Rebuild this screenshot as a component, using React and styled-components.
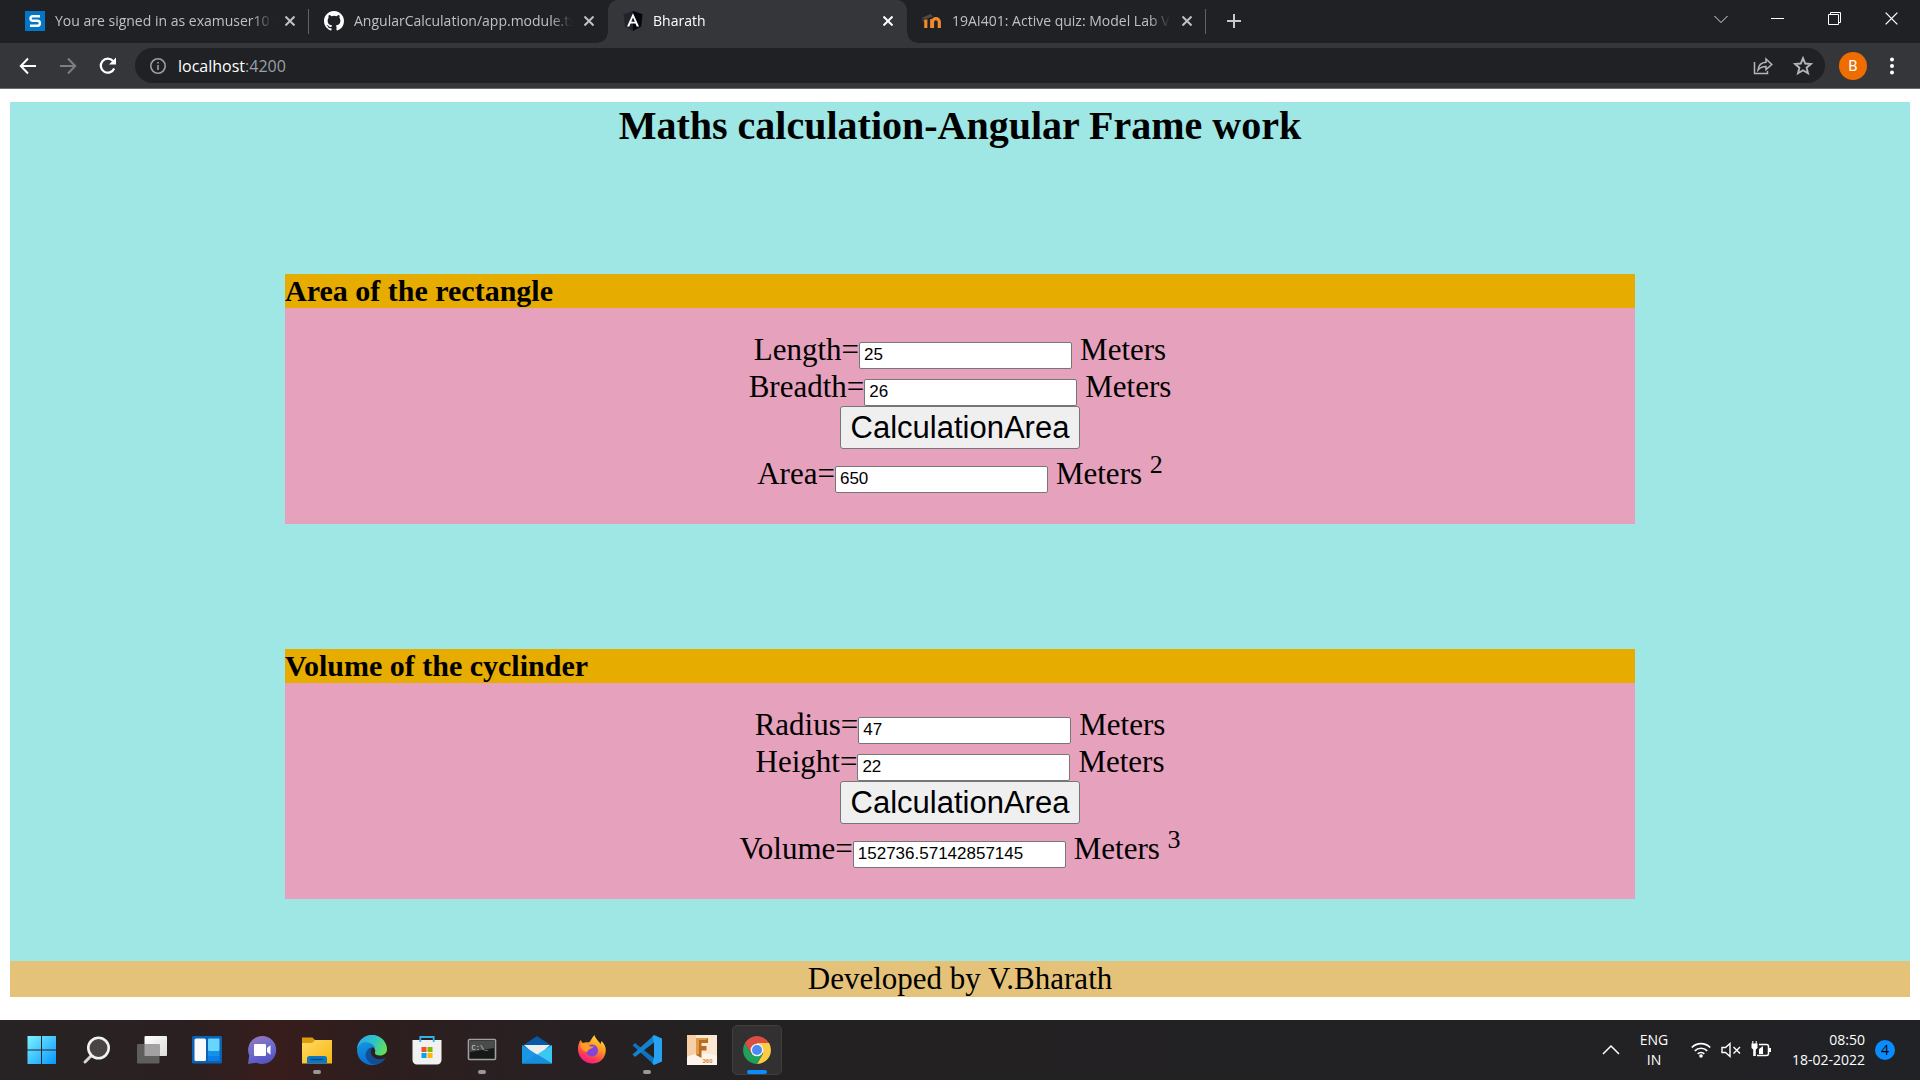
import React, { useState } from "react";
import styled, { createGlobalStyle } from "styled-components";

const UI_FONT = `"Open Sans", "Noto Sans", sans-serif`;
const SERIF = `"Liberation Serif", "Times New Roman", serif`;
const SANS = `"Liberation Sans", Arial, sans-serif`;

const GlobalStyle = createGlobalStyle`
  *, *::before, *::after { box-sizing: border-box; }
  body { margin: 0; background: #fff; font-family: ${SERIF}; color: #000; }
  button { font: inherit; }
`;

const Screen = styled.div`
  display: flex;
  flex-direction: column;
  min-height: 100vh;
`;

/* ---------- browser frame ---------- */

const BrowserFrame = styled.header`
  font-family: ${UI_FONT};
  border-bottom: 1px solid #6b6c6e;
`;

const TabStrip = styled.div`
  display: flex;
  height: 43px;
  padding-left: 10px;
  background: #202124;
`;

const Tab = styled.div`
  position: relative;
  display: flex;
  align-items: center;
  width: 299px;
  padding: 0 9px 1px 15px;
  font-size: 14px;
  line-height: 20px;
  color: ${(p) => (p.$active ? "#fff" : "#bdc1c6")};
  background: ${(p) => (p.$active ? "#35363a" : "transparent")};
  border-radius: 10px 10px 0 0;

  &::before,
  &::after {
    content: "";
    display: ${(p) => (p.$active ? "block" : "none")};
    position: absolute;
    bottom: 0;
    width: 10px;
    height: 10px;
  }
  &::before {
    left: -10px;
    background: radial-gradient(circle at 0 0, transparent 9px, #35363a 10px);
  }
  &::after {
    right: -10px;
    background: radial-gradient(circle at 100% 0, transparent 9px, #35363a 10px);
  }
`;

const TabDivider = styled.span`
  position: absolute;
  right: 0;
  top: 9px;
  width: 1px;
  height: 25px;
  background: #5f6368;
`;

const TabTitle = styled.span`
  flex: 1;
  margin-left: 10px;
  overflow: hidden;
  white-space: nowrap;
  mask-image: linear-gradient(to right, #000 calc(100% - 28px), transparent 97%);
`;

const IconButton = styled.button`
  display: flex;
  align-items: center;
  justify-content: center;
  flex: none;
  width: ${(p) => p.$w || 20}px;
  height: ${(p) => p.$h || 20}px;
  padding: 0;
  border: 0;
  background: none;
  color: ${(p) => p.$color || "inherit"};
  svg { display: block; }
`;

const NewTab = styled(IconButton)`
  margin: 7px 0 0 14px;
`;

const WindowControls = styled.div`
  display: flex;
  margin-left: auto;
`;

const Toolbar = styled.div`
  display: flex;
  align-items: center;
  height: 45px;
  padding: 0 8px;
  background: #35363a;
`;

const Omnibox = styled.form`
  display: flex;
  align-items: center;
  flex: 1;
  height: 35px;
  margin: 0 14px 0 7px;
  padding: 0 2px 0 13px;
  border-radius: 18px;
  background: #202124;
`;

const Address = styled.span`
  flex: 1;
  margin-left: 10px;
  font-size: 16px;
  line-height: 24px;
  color: #9aa0a6;
  b { font-weight: 400; color: #fff; }
`;

const Avatar = styled.button`
  width: 28px;
  height: 28px;
  margin-right: 5px;
  padding: 0;
  border: 0;
  border-radius: 50%;
  background: #ef6c00;
  color: #fff;
  font-family: Roboto, sans-serif;
  font-size: 15px;
`;

/* ---------- web page ---------- */

const Page = styled.main`
  flex: 1;
  padding: 13px 10px 23px;
`;

const Container = styled.div`
  padding-bottom: 62px;
  background: #9ee7e5;
`;

const Heading = styled.h1`
  margin: 0;
  font-size: 40px;
  line-height: 47px;
  text-align: center;
`;

const Section = styled.section`
  width: min(1350px, 100%);
  margin: 125px auto 0;
  background: #e6a1bc;
`;

const SectionTitle = styled.h2`
  margin: 0;
  background: #e6ac00;
  font-size: 30px;
  line-height: 34px;
`;

const SectionBody = styled.form`
  display: flex;
  flex-direction: column;
  align-items: center;
  padding: 23px 0 32px;
`;

const Field = styled.div`
  display: flex;
  align-items: baseline;
  height: 37px;
  font-size: 31px;
  line-height: 37px;
`;

const TextBox = styled.input`
  width: 213px;
  height: 27px;
  padding: 1px 4px;
  border: 1px solid #767676;
  border-radius: 2px;
  background: #fff;
  font-family: ${SANS};
  font-size: 17px;
  color: #000;
`;

const Unit = styled.span`
  margin-left: 8px;
  sup {
    font-size: 26px;
    line-height: 0;
    vertical-align: super;
  }
`;

const CalcButton = styled.button`
  height: 43px;
  margin: 1px 0 6px;
  padding: 0 10px;
  border: 1px solid #767676;
  border-radius: 3px;
  background: #efefef;
  font-family: ${SANS};
  font-size: 31px;
  line-height: 36px;
  color: #000;
`;

const Footer = styled.footer`
  background: #e5c27a;
  font-size: 31px;
  line-height: 36px;
  text-align: center;
`;

/* ---------- taskbar ---------- */

const Taskbar = styled.footer`
  display: flex;
  align-items: center;
  justify-content: space-between;
  height: 60px;
  padding: 0 25px 0 17px;
  background: linear-gradient(to right, #272324 0, #2b2021 190px, #381d1c 270px, #2e1e1e 370px, #292022 520px, #232122 720px, #222123 1500px, #212226 100%);
  font-family: ${UI_FONT};
  color: #fff;
`;

const AppList = styled.nav`
  display: flex;
  gap: 5px;
`;

const AppButton = styled.button`
  position: relative;
  display: flex;
  align-items: center;
  justify-content: center;
  width: 50px;
  height: 50px;
  padding: 0;
  border: 1px solid ${(p) => (p.$active ? "#403e3f" : "transparent")};
  border-radius: 5px;
  background: ${(p) => (p.$active ? "#323031" : "none")};
  svg { display: block; }
`;

const RunMark = styled.span`
  position: absolute;
  bottom: 0;
  left: 50%;
  width: ${(p) => (p.$active ? 20 : 8)}px;
  height: 4px;
  border-radius: 2px;
  background: ${(p) => (p.$active ? "#0a8cff" : "#9b9697")};
  transform: translateX(-50%);
`;

const Tray = styled.div`
  display: flex;
  align-items: center;
`;

const TrayText = styled.div`
  width: ${(p) => p.$w}px;
  font-size: 14px;
  line-height: 20px;
  text-align: ${(p) => p.$align};
`;

const TrayIcons = styled.div`
  display: flex;
  gap: 10px;
  margin: 0 16px 0 4px;
`;

const Badge = styled.span`
  width: 20px;
  height: 20px;
  margin-left: 10px;
  border-radius: 50%;
  background: #0a8cff;
  color: #000;
  font-size: 14px;
  line-height: 20px;
  text-align: center;
`;

/* ---------- icons ---------- */

const CloseIcon = ({ size = 10, w = 2 }) => (
  <svg width={size} height={size} viewBox="0 0 10 10" stroke="currentColor" strokeWidth={w} fill="none">
    <path d="M0.5 0.5 9.5 9.5M9.5 0.5 0.5 9.5" />
  </svg>
);

const MeetIcon = () => (
  <svg width="20" height="20" viewBox="0 0 20 20">
    <rect width="20" height="20" fill="#0277c8" />
    <path d="M15 5.2H7.8A2.3 2.3 0 0 0 7.8 9.8H12.4A2.4 2.4 0 0 1 12.4 14.8H5" fill="none" stroke="#fff" strokeWidth="2.4" />
  </svg>
);

const GithubIcon = () => (
  <svg width="20" height="20" viewBox="0 0 16 16" fill="#fff">
    <path d="M8 0C3.58 0 0 3.58 0 8c0 3.54 2.29 6.53 5.47 7.59.4.07.55-.17.55-.38 0-.19-.01-.82-.01-1.49-2.01.37-2.53-.49-2.69-.94-.09-.23-.48-.94-.82-1.13-.28-.15-.68-.52-.01-.53.63-.01 1.08.58 1.23.82.72 1.21 1.87.87 2.33.66.07-.52.28-.87.51-1.07-1.78-.2-3.64-.89-3.64-3.95 0-.87.31-1.59.82-2.15-.08-.2-.36-1.02.08-2.12 0 0 .67-.21 2.2.82a7.7 7.7 0 0 1 4 0c1.53-1.04 2.2-.82 2.2-.82.44 1.1.16 1.92.08 2.12.51.56.82 1.27.82 2.15 0 3.07-1.87 3.75-3.65 3.95.29.25.54.73.54 1.48 0 1.07-.01 1.93-.01 2.2 0 .21.15.46.55.38A8.01 8.01 0 0 0 16 8c0-4.42-3.58-8-8-8z" />
  </svg>
);

const AngularIcon = () => (
  <svg width="20" height="20" viewBox="0 0 20 20">
    <path d="M10 0 19.5 3.3 18 15.6 10 20 2 15.6 0.5 3.3z" fill="#20222c" />
    <path d="M10 0 19.5 3.3 18 15.6 10 20z" fill="#04060e" />
    <path d="M10 2.2 4 15.6H6.3L7.5 12.6H12.5L13.7 15.6H16zM10 6.4 11.8 10.7H8.2z" fill="#fff" fillRule="evenodd" />
  </svg>
);

const MoodleIcon = () => (
  <svg width="20" height="20" viewBox="0 0 20 20">
    <path d="M3.8 17V8.5M10.5 17V11a3.3 3.3 0 0 1 6.8 0V17" stroke="#f08a2c" strokeWidth="3.2" fill="none" />
    <path d="M9.7 8.2V17" stroke="#f08a2c" strokeWidth="3.2" />
    <path d="M0 6.8 8.5 3 11 5.5 4 8z" fill="#57483f" />
    <path d="M1 7V11" stroke="#57483f" strokeWidth="1" />
  </svg>
);

const Stroke = ({ size = 20, box = 20, w = 2, children }) => (
  <svg width={size} height={size} viewBox={`0 0 ${box} ${box}`} fill="none" stroke="currentColor" strokeWidth={w}>
    {children}
  </svg>
);

const StartIcon = () => (
  <svg width="30" height="30" viewBox="0 0 30 30">
    <defs>
      <linearGradient id="start" x1="0" y1="0" x2="1" y2="1">
        <stop offset="0" stopColor="#7df3ff" />
        <stop offset="1" stopColor="#0795ff" />
      </linearGradient>
    </defs>
    <path d="M0.5 1H14V14.4H0.5zM15 1H29V14.4H15zM0.5 15.4H14V29H0.5zM15 15.4H29V29H15z" fill="url(#start)" />
  </svg>
);

const SearchIcon = () => (
  <svg width="30" height="30" viewBox="0 0 30 30">
    <path d="M9.5 20.5 3 27" stroke="#d3d5d8" strokeWidth="3" strokeLinecap="round" />
    <circle cx="16.5" cy="13" r="10.2" fill="#4a4445" stroke="#f1f2f3" strokeWidth="2.6" />
  </svg>
);

const TaskViewIcon = () => (
  <svg width="30" height="30" viewBox="0 0 30 30">
    <defs>
      <linearGradient id="tv" x1="0" y1="0" x2="1" y2="1">
        <stop offset="0" stopColor="#fff" />
        <stop offset="1" stopColor="#dcdcdc" />
      </linearGradient>
    </defs>
    <rect x="7.5" y="1" width="22.5" height="20" rx="1" fill="url(#tv)" />
    <rect x="0" y="9" width="22.5" height="19.5" rx="1" fill="#5f5e5e" />
    <rect x="7.5" y="9" width="15" height="12" fill="#a3a1a1" />
  </svg>
);

const WidgetsIcon = () => (
  <svg width="30" height="30" viewBox="0 0 30 30">
    <rect y="1" width="30" height="27.5" rx="1.5" fill="#0b62b5" />
    <rect x="2.5" y="3.5" width="11.5" height="22.5" rx="1.5" fill="#fafafa" />
    <rect x="16" y="3.5" width="11.5" height="12.5" rx="1" fill="#67d5fc" />
    <rect x="16" y="16" width="11.5" height="5" fill="#1591ea" />
    <rect x="16" y="21" width="11.5" height="5" fill="#0a7ee6" />
  </svg>
);

const ChatIcon = () => (
  <svg width="30" height="30" viewBox="0 0 30 30">
    <defs>
      <linearGradient id="chat" x1="0.3" y1="0" x2="0.7" y2="1">
        <stop offset="0" stopColor="#9477b8" />
        <stop offset="0.5" stopColor="#6a6bd0" />
        <stop offset="1" stopColor="#5450bd" />
      </linearGradient>
    </defs>
    <path d="M15 1A14 14 0 1 1 9.5 27.8L1 29 2.2 20.5A14 14 0 0 1 15 1z" fill="url(#chat)" />
    <rect x="7" y="9" width="12" height="12" rx="1" fill="#fff" />
    <path d="M20 13 23.5 10.3V19.7L20 17z" fill="#fff" />
  </svg>
);

const ExplorerIcon = () => (
  <svg width="30" height="30" viewBox="0 0 30 30">
    <defs>
      <linearGradient id="fold" x1="0" y1="0" x2="1" y2="1">
        <stop offset="0" stopColor="#ffda69" />
        <stop offset="1" stopColor="#f8b60c" />
      </linearGradient>
    </defs>
    <path d="M0 2.5H10.5L13 5H20V12H0z" fill="#dd9b09" />
    <path d="M0 8H10L13 5H30V28.5H0z" fill="url(#fold)" />
    <path d="M5 28.5V23.5A2.5 2.5 0 0 1 7.5 21H22.5A2.5 2.5 0 0 1 25 23.5V28.5z" fill="#0c78c5" />
    <path d="M8.5 24.5H21.5" stroke="#07457f" strokeWidth="1.3" />
  </svg>
);

const EdgeIcon = () => (
  <svg width="30" height="30" viewBox="0 0 30 30">
    <defs>
      <linearGradient id="edgeTop" x1="0" y1="0.3" x2="1" y2="0.6">
        <stop offset="0" stopColor="#28a9e8" />
        <stop offset="0.55" stopColor="#32c4c4" />
        <stop offset="1" stopColor="#62e34f" />
      </linearGradient>
      <linearGradient id="edgeLow" x1="0" y1="0" x2="0.3" y2="1">
        <stop offset="0" stopColor="#1595e0" />
        <stop offset="1" stopColor="#0c6fd0" />
      </linearGradient>
    </defs>
    <path d="M0 15A15 15 0 0 1 30 14.5C30 18 27 20.5 23 20.5 19 20.5 17.5 19 18 17.5 19 14 17 11.5 12 10 7 8.5 1 11 0 15z" fill="url(#edgeTop)" />
    <path d="M0 15C1 9 6 6.5 11 7.5 15.5 8.5 18 11 18.2 13.5 15 11 11 14 11 18 11 24 17 28 22.5 28A15 15 0 0 1 0 15z" fill="url(#edgeLow)" />
    <path d="M12.5 13C10 15 8 18 9 22 10.5 27 15 30 19 29.5 24 28.5 27.5 25.5 28.5 22.5 25 25 18 25 15 20.5 13.5 18 13.5 15 15 12.5z" fill="#104f96" />
  </svg>
);

const StoreIcon = () => (
  <svg width="30" height="30" viewBox="0 0 30 30">
    <path d="M0.5 5H29.5V25A4.5 4.5 0 0 1 25 29.5H5A4.5 4.5 0 0 1 0.5 25z" fill="#f1f1f1" />
    <path d="M8.3 7V2H21.7V7" stroke="#2fb2ea" strokeWidth="1.8" fill="none" />
    <rect x="9.5" y="12" width="5" height="5" fill="#f05022" />
    <rect x="15.5" y="12" width="5" height="5" fill="#7fb900" />
    <rect x="9.5" y="18" width="5" height="5" fill="#03a4ef" />
    <rect x="15.5" y="18" width="5" height="5" fill="#ffb801" />
  </svg>
);

const TerminalIcon = () => (
  <svg width="30" height="30" viewBox="0 0 30 30">
    <rect x="1.5" y="4.5" width="27" height="20" rx="1" fill="#161717" stroke="#a0a0a0" strokeWidth="1.6" />
    <path d="M3 6H27V13L3 17z" fill="#4a4b4c" />
    <text x="4.5" y="14.5" fontSize="7" fontFamily="Liberation Mono, monospace" fill="#ddd">C:\_</text>
  </svg>
);

const MailIcon = () => (
  <svg width="30" height="30" viewBox="0 0 30 30">
    <path d="M0 11 15 1 30 11V20H0z" fill="#0759a8" />
    <path d="M2 10H28L15 22z" fill="#eeedee" />
    <path d="M0 10 15 19.5 30 28.5H0z" fill="#1a96e5" />
    <path d="M30 10 15 19.5 29.5 28.5H30z" fill="#39c7f3" />
    <path d="M0 28.5 15 19.5 30 28.5z" fill="#168ee0" />
  </svg>
);

const FirefoxIcon = () => (
  <svg width="30" height="30" viewBox="0 0 30 30">
    <defs>
      <linearGradient id="ff" x1="0.8" y1="0" x2="0.3" y2="1">
        <stop offset="0" stopColor="#ffe83a" />
        <stop offset="0.4" stopColor="#ff9a22" />
        <stop offset="0.75" stopColor="#ff3f55" />
        <stop offset="1" stopColor="#f5148c" />
      </linearGradient>
    </defs>
    <path d="M3.5 5 6 8.5C8 7 10 7 12 7.5 14 6 14.5 3 17.5 0 18.5 4 22 6 23.5 9L24.5 6C28 9.5 29.5 13 28.5 18 27 25 21 29 14.5 28.5 7 28 1.5 22 1 15 0.8 11 2 7.5 3.5 5z" fill="url(#ff)" />
    <circle cx="15" cy="15.5" r="6" fill="#8544d8" />
    <path d="M3.5 9C7 6.5 11 8.5 13 11.5L17 11.5C15 14 11 13.5 10.5 17 6 17 3.5 13 3.5 9z" fill="#ff9a22" />
  </svg>
);

const CodeIcon = () => (
  <svg width="30" height="30" viewBox="0 0 30 30">
    <path d="M0.5 10.2 3 8 22 23V29.8z" fill="#0b74be" />
    <path d="M0.5 19.5 3 22 22 7.5V0.3z" fill="#1382cf" />
    <path d="M22 0 30 3.5V26.5L22 30 20.5 28.5 22 22V8L20.5 1.5z" fill="#26a2f0" />
  </svg>
);

const FusionIcon = () => (
  <svg width="30" height="30" viewBox="0 0 30 30">
    <rect width="30" height="30" fill="#fbe7d3" />
    <path d="M0 0H9V19L0 22z" fill="#f6cfa8" />
    <path d="M0 22Q15 15 30 21V30H0z" fill="#fff4e9" />
    <path d="M9 3H21V8H14.5V11H19.5V15.5H14.5V23L9 20z" fill="#b96b22" />
    <path d="M9 3H21L19 5H12V19L9 20z" fill="#e29a48" />
    <text x="15.5" y="28" fontSize="6" fontWeight="700" fontFamily="Liberation Sans, sans-serif" fill="#d98236">360</text>
  </svg>
);

const ChromeIcon = () => (
  <svg width="28" height="28" viewBox="0 0 28 28">
    <path d="M14 14V7H26.1A14 14 0 0 1 14 28L20 17.5z" fill="#fdcb44" />
    <path d="M14 14 20 17.5 14 28A14 14 0 0 1 1.9 7L8 17.5z" fill="#1ea25b" />
    <path d="M14 7H26.1A14 14 0 0 0 1.9 7L8 17.5 14 14z" fill="#d94f43" />
    <circle cx="14" cy="14" r="6.3" fill="#f4f4f4" />
    <circle cx="14" cy="14" r="5" fill="#4a8af4" />
  </svg>
);

/* ---------- data ---------- */

const TABS = [
  { title: "You are signed in as examuser101", icon: <MeetIcon />, divider: true },
  { title: "AngularCalculation/app.module.ts", icon: <GithubIcon /> },
  { title: "Bharath", icon: <AngularIcon />, active: true },
  { title: "19AI401: Active quiz: Model Lab V", icon: <MoodleIcon />, divider: true },
];

const APPS = [
  { name: "Start", icon: <StartIcon /> },
  { name: "Search", icon: <SearchIcon /> },
  { name: "Task View", icon: <TaskViewIcon /> },
  { name: "Widgets", icon: <WidgetsIcon /> },
  { name: "Chat", icon: <ChatIcon /> },
  { name: "File Explorer", icon: <ExplorerIcon />, running: true },
  { name: "Edge", icon: <EdgeIcon /> },
  { name: "Store", icon: <StoreIcon /> },
  { name: "Command Prompt", icon: <TerminalIcon />, running: true },
  { name: "Mail", icon: <MailIcon /> },
  { name: "Firefox", icon: <FirefoxIcon /> },
  { name: "Code", icon: <CodeIcon />, running: true },
  { name: "Fusion", icon: <FusionIcon /> },
  { name: "Chrome", icon: <ChromeIcon />, running: true, active: true },
];

function Browser() {
  return (
    <BrowserFrame>
      <TabStrip>
        {TABS.map((t) => (
          <Tab key={t.title} $active={t.active}>
            {t.icon}
            <TabTitle>{t.title}</TabTitle>
            <IconButton aria-label="Close tab"><CloseIcon /></IconButton>
            {t.divider && <TabDivider />}
          </Tab>
        ))}
        <NewTab $w={28} $h={28} $color="#c6c8cc" aria-label="New tab">
          <Stroke size={16} box={16} w={2}><path d="M8 1V15M1 8H15" /></Stroke>
        </NewTab>
        <WindowControls>
          <IconButton $w={57} $h={37} $color="#dcdddd" aria-label="Search tabs">
            <Stroke size={14} box={14} w={1}><path d="M0.5 4 7 10.5 13.5 4" /></Stroke>
          </IconButton>
          <IconButton $w={57} $h={37} $color="#fff" aria-label="Minimize">
            <Stroke size={13} box={13} w={1}><path d="M0 6.5H13" /></Stroke>
          </IconButton>
          <IconButton $w={57} $h={37} $color="#fff" aria-label="Restore">
            <Stroke size={13} box={13} w={1}><path d="M0.5 2.5H10.5V12.5H0.5zM2.5 2.5V0.5H12.5V10.5H10.5" /></Stroke>
          </IconButton>
          <IconButton $w={57} $h={37} $color="#fff" aria-label="Close"><CloseIcon size={13} w={1} /></IconButton>
        </WindowControls>
      </TabStrip>
      <Toolbar>
        <IconButton $w={40} $h={40} $color="#fff" aria-label="Back">
          <Stroke><path d="M18 10H3M10 2.5 2.8 10 10 17.5" /></Stroke>
        </IconButton>
        <IconButton $w={40} $h={40} $color="#7d7e81" aria-label="Forward">
          <Stroke><path d="M2 10H17M10 2.5 17.2 10 10 17.5" /></Stroke>
        </IconButton>
        <IconButton $w={40} $h={40} $color="#fff" aria-label="Reload">
          <Stroke w={2.2}>
            <path d="M16.2 12.5A7 7 0 1 1 15 5" />
            <path d="M18 1.5V8.5H11z" fill="currentColor" stroke="none" />
          </Stroke>
        </IconButton>
        <Omnibox onSubmit={(e) => e.preventDefault()}>
          <IconButton type="button" $w={20} $h={20} $color="#9aa0a6" aria-label="Site information">
            <Stroke size={16} box={16} w={1.6}><circle cx="8" cy="8" r="7.2" /><path d="M8 7V12M8 4V5.6" /></Stroke>
          </IconButton>
          <Address><b>localhost</b>:4200</Address>
          <IconButton type="button" $w={40} $h={30} $color="#b4b6b8" aria-label="Share">
            <Stroke w={1.5}>
              <path d="M1.5 6V17.5H14.5V15" />
              <path d="M5 14C5.5 9 8.5 6.5 13 6.3V3L18.8 8.5 13 13.5V10.5C9.5 10.5 7 11.5 5 14z" />
            </Stroke>
          </IconButton>
          <IconButton type="button" $w={40} $h={30} $color="#b4b6b8" aria-label="Bookmark">
            <Stroke w={1.9}><path d="M10 2.2 12.2 7.5 18 8 13.6 11.7 15 17.3 10 14.3 5 17.3 6.4 11.7 2 8 7.8 7.5z" /></Stroke>
          </IconButton>
        </Omnibox>
        <Avatar aria-label="Profile">B</Avatar>
        <IconButton $w={40} $h={30} $color="#fff" aria-label="Menu">
          <svg width="4" height="18" viewBox="0 0 4 18" fill="currentColor">
            <circle cx="2" cy="2.5" r="2" /><circle cx="2" cy="9" r="2" /><circle cx="2" cy="15.5" r="2" />
          </svg>
        </IconButton>
      </Toolbar>
    </BrowserFrame>
  );
}

function Calculator({ id, title, first, second, result, power, compute }) {
  const [a, setA] = useState(first.value);
  const [b, setB] = useState(second.value);
  const [out, setOut] = useState(result.value);
  return (
    <Section>
      <SectionTitle>{title}</SectionTitle>
      <SectionBody onSubmit={(e) => { e.preventDefault(); setOut(String(compute(+a, +b))); }}>
        <Field>
          <label htmlFor={`${id}-a`}>{first.label}=</label>
          <TextBox id={`${id}-a`} type="text" value={a} onChange={(e) => setA(e.target.value)} />
          <Unit>Meters</Unit>
        </Field>
        <Field>
          <label htmlFor={`${id}-b`}>{second.label}=</label>
          <TextBox id={`${id}-b`} type="text" value={b} onChange={(e) => setB(e.target.value)} />
          <Unit>Meters</Unit>
        </Field>
        <CalcButton type="submit">CalculationArea</CalcButton>
        <Field>
          <label htmlFor={`${id}-out`}>{result.label}=</label>
          <TextBox id={`${id}-out`} type="text" value={out} onChange={(e) => setOut(e.target.value)} />
          <Unit>Meters <sup>{power}</sup></Unit>
        </Field>
      </SectionBody>
    </Section>
  );
}

function SystemTaskbar() {
  return (
    <Taskbar>
      <AppList aria-label="Taskbar">
        {APPS.map((app) => (
          <AppButton key={app.name} $active={app.active} aria-label={app.name}>
            {app.icon}
            {app.running && <RunMark $active={app.active} />}
          </AppButton>
        ))}
      </AppList>
      <Tray>
        <IconButton $w={20} $h={20} aria-label="Show hidden icons">
          <Stroke size={18} box={18} w={1.5}><path d="M1 13 9 5 17 13" /></Stroke>
        </IconButton>
        <TrayText $w={66} $align="center">ENG<br />IN</TrayText>
        <TrayIcons>
          <Stroke w={1.7}>
            <path d="M0.8 7.5A13 13 0 0 1 19.2 7.5M3.8 10.8A8.8 8.8 0 0 1 16.2 10.8M6.7 13.9A4.7 4.7 0 0 1 13.3 13.9" />
            <circle cx="10" cy="16" r="1.8" fill="currentColor" stroke="none" />
          </Stroke>
          <Stroke w={1.4}>
            <path d="M1 7.5H4.5L9 3.5V16.5L4.5 12.5H1zM12.5 7 19 13.5M19 7 12.5 13.5" />
          </Stroke>
          <Stroke w={1.5}>
            <path d="M8 4.5H15.5A2 2 0 0 1 17.5 6.5V13.5A2 2 0 0 1 15.5 15.5H6" />
            <path d="M8 14V9L12 6V14zM18 8H20V12H18zM0.5 3.5H6.5V8L4.8 9.5V16H2.2V9.5L0.5 8zM1.3 1H2.3V4H1.3zM4.7 1H5.7V4H4.7z" fill="currentColor" stroke="none" />
          </Stroke>
        </TrayIcons>
        <TrayText $w={78} $align="right">08:50<br />18-02-2022</TrayText>
        <Badge>4</Badge>
      </Tray>
    </Taskbar>
  );
}

export default function App() {
  return (
    <Screen>
      <GlobalStyle />
      <Browser />
      <Page>
        <Container>
          <Heading>Maths calculation-Angular Frame work</Heading>
          <Calculator
            id="area"
            title="Area of the rectangle"
            first={{ label: "Length", value: "25" }}
            second={{ label: "Breadth", value: "26" }}
            result={{ label: "Area", value: "650" }}
            power="2"
            compute={(l, b) => l * b}
          />
          <Calculator
            id="volume"
            title="Volume of the cyclinder"
            first={{ label: "Radius", value: "47" }}
            second={{ label: "Height", value: "22" }}
            result={{ label: "Volume", value: "152736.57142857145" }}
            power="3"
            compute={(r, h) => (22 / 7) * r * r * h}
          />
        </Container>
        <Footer>Developed by V.Bharath</Footer>
      </Page>
      <SystemTaskbar />
    </Screen>
  );
}
